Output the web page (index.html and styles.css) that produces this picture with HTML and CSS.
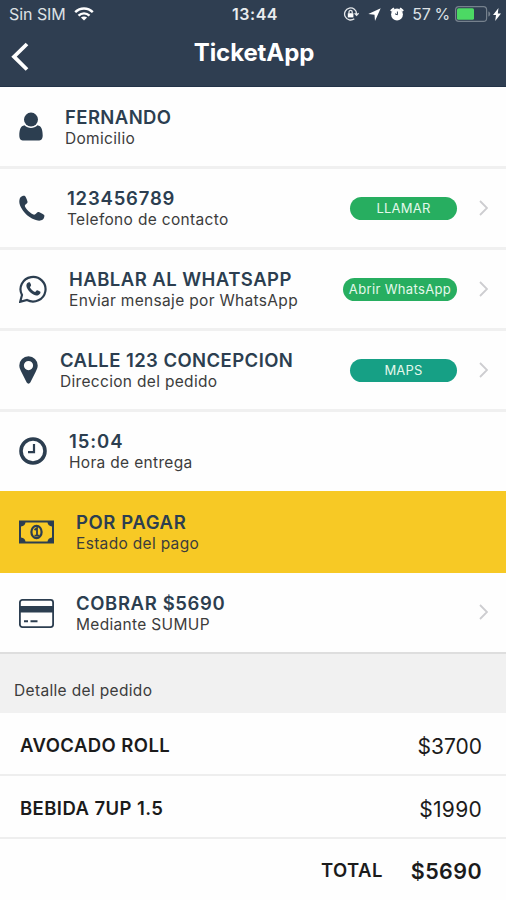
FILE: index.html
```
<!DOCTYPE html>
<html lang="es">
<head>
<meta charset="utf-8">
<title>TicketApp</title>
<link rel="stylesheet" href="styles.css">
</head>
<body>
<header class="header">
  <div class="status">
    <div class="status-left">
      <span class="carrier">Sin SIM</span>
      <svg width="20" height="14" viewBox="0 0 20 14" fill="none" stroke="#fff" stroke-width="2.4"><path d="M1.2 5.2C6.2.2 13.8.2 18.8 5.2M4.5 8.6c3.2-3 7.8-3 11 0"/><path d="M10 13.6 6.9 10.6c1.8-1.5 4.4-1.5 6.2 0z" fill="#fff" stroke="none"/></svg>
    </div>
    <span class="time">13:44</span>
    <div class="status-right">
      <svg class="lock" width="16" height="14" viewBox="0 0 16 14" fill="none" stroke="#e4e7ea" stroke-width="1.3"><path d="M13.600 7A6 6 0 1 0 11.300 11.700M11.600 6.200l2 2.200 2-2.200"/><rect x="4.800" y="6.200" width="5.600" height="4.200" fill="#fff" stroke="none"/><path d="M6 6.500V5a1.600 1.600 0 0 1 3.200 0v1.500"/></svg>
      <svg class="arrow" width="13" height="13" viewBox="0 0 13 13" fill="#fff"><path d="M12.700.3.3 6l6.200.7.5 6.200z"/></svg>
      <svg class="alarm" width="14" height="14" viewBox="0 0 14 14"><circle cx="7" cy="7.500" r="5.900" fill="#fff"/><path d="M.8 4 4 1.200M10 1.200 13.200 4" stroke="#fff" stroke-width="2"/><path d="M7.400 4.500v3.300L5 6.800" fill="none" stroke="#2f3e51" stroke-width="1"/></svg>
      <span class="percent">57 %</span>
      <svg class="battery" width="36" height="16" viewBox="0 0 36 16"><rect x=".6" y=".6" width="31" height="14.8" rx="3.2" fill="none" stroke="#76818d" stroke-width="1.2"/><rect x="2" y="2.2" width="17" height="11.6" rx="1.5" fill="#4cd964"/><path d="M33.3 5.5c2.6.6 2.6 4.4 0 5z" fill="#76818d"/></svg>
      <svg class="bolt" width="8" height="13" viewBox="0 0 8 13" fill="#fff"><path d="M5.5 0 0 7h3L2.2 13 8 5.4H4.8z"/></svg>
    </div>
  </div>
  <div class="nav">
    <svg class="back" width="19" height="30" viewBox="0 0 19 30" fill="none" stroke="#fff" stroke-width="3.8"><path d="M17 2 4 14.7 17 27.5"/></svg>
    <h1 class="title">TicketApp</h1>
  </div>
</header>

<main>
  <section class="row row-first">
    <svg width="24" height="30" viewBox="0 0 24 30" fill="#2c3e50"><circle cx="12" cy="7.600" r="7"/><path d="M5.500 13.300c3.700 3.500 9.300 3.500 13 0C22.500 14 23.700 18 23.700 23.500c0 3.700-1.700 5.100-4.400 5.100H4.700c-2.700 0-4.400-1.400-4.400-5.100 0-5.500 1.200-9.500 5.200-10.200z"/></svg>
    <div class="info"><h2 class="t-name">FERNANDO</h2><p>Domicilio</p></div>
  </section>
  <section class="row">
    <svg width="26" height="27" viewBox="0 0 26 27" fill="#2c3e50"><path d="M1.500 2.300C2.400 1 5 .2 6 .9c.8.600 2.500 5 2.600 6.100.1 1.400-2.800 2.500-2.800 3.700 0 2 6.400 8.700 9.300 9 1.600.1 2.500-2.800 4-2.800 1.200 0 5.500 2.300 6.100 3.100.7 1-.300 3.700-1.400 4.600-3 2.400-8.700.7-13.200-2.500C5.800 18.700 1.400 12.800.5 8.500.1 6.300.3 3.900 1.500 2.300z"/></svg>
    <div class="info"><h2 class="t-phone">123456789</h2><p>Telefono de contacto</p></div>
    <span class="pill pill-call">LLAMAR</span>
    <svg class="chevron" width="9" height="16" viewBox="0 0 9 16"><path d="M1 1l7 7-7 7"/></svg>
  </section>
  <section class="row">
    <svg width="28" height="28" viewBox="0 0 28 28"><path d="M1.200 26.800 3 20A12.500 12.300 0 1 1 8 25z" fill="none" stroke="#2c3e50" stroke-width="2.200"/><path d="M8.200 8.200c.7-1 1.800-1.200 2.500-.9.5.3 1.400 2.500 1.400 3 0 .8-1.300 1.600-1.200 2 .5 1.600 3.300 4.100 5.100 4.600.7.100 1.400-1.800 2.200-1.700.7 0 3 1.200 3.200 1.600.5 2-1.700 3.700-3.700 3.700-4 0-10-5.500-10.300-9.400 0-1 .2-2.200.8-2.900z" fill="#2c3e50"/></svg>
    <div class="info"><h2 class="t-wa">HABLAR AL WHATSAPP</h2><p>Enviar mensaje por WhatsApp</p></div>
    <span class="pill pill-wa">Abrir WhatsApp</span>
    <svg class="chevron" width="9" height="16" viewBox="0 0 9 16"><path d="M1 1l7 7-7 7"/></svg>
  </section>
  <section class="row">
    <svg width="19" height="28" viewBox="0 0 19 28"><path d="M9.500.3a9.200 9.200 0 0 1 9.200 9.200c0 2.500-1 4.200-2.100 6.400l-5.300 10.700c-.8 1.500-2.800 1.500-3.600 0L2.400 15.900C1.300 13.700.3 12 .3 9.500A9.200 9.200 0 0 1 9.500.3zm0 4.700a4.600 4.600 0 1 0 0 9.200 4.600 4.600 0 0 0 0-9.200z" fill="#2c3e50" fill-rule="evenodd"/></svg>
    <div class="info"><h2 class="t-dir">CALLE 123 CONCEPCION</h2><p>Direccion del pedido</p></div>
    <span class="pill pill-maps">MAPS</span>
    <svg class="chevron" width="9" height="16" viewBox="0 0 9 16"><path d="M1 1l7 7-7 7"/></svg>
  </section>
  <section class="row row-hour">
    <svg width="28" height="28" viewBox="0 0 28 28" fill="none" stroke="#2c3e50"><circle cx="14" cy="14" r="12" stroke-width="3.600"/><path d="M15 7v8.200H9" stroke-width="2.200"/></svg>
    <div class="info"><h2 class="t-hour">15:04</h2><p>Hora de entrega</p></div>
  </section>
  <section class="row row-pending">
    <svg width="35" height="24" viewBox="0 0 35 24"><path d="M0 .5h35v23H0zM6.500 2.500Q6 6 2 6.500v11q4 .5 4.500 4h22q.5-3.500 4.500-4v-11q-4-.5-4.500-4z" fill="#2c3e50" fill-rule="evenodd"/><ellipse cx="17.500" cy="12" rx="5.100" ry="6.200" fill="none" stroke="#2c3e50" stroke-width="2.200"/><path d="M15.500 10 18 8v7.200M15.500 15.700h5" fill="none" stroke="#2c3e50" stroke-width="1.800"/></svg>
    <div class="info"><h2 class="t-pay">POR PAGAR</h2><p>Estado del pago</p></div>
  </section>
  <section class="row row-last">
    <svg width="35" height="29" viewBox="0 0 35 29"><rect x=".9" y=".9" width="33.200" height="27.200" rx="2.500" fill="none" stroke="#2c3e50" stroke-width="1.800"/><path d="M1 7h33v6.500H1zM5 21.300h4v2H5zM11.500 21.300h7v2h-7z" fill="#2c3e50"/></svg>
    <div class="info"><h2 class="t-cobrar">COBRAR $5690</h2><p>Mediante SUMUP</p></div>
    <svg class="chevron" width="9" height="16" viewBox="0 0 9 16"><path d="M1 1l7 7-7 7"/></svg>
  </section>

  <div class="section-label">Detalle del pedido</div>
  <div class="item"><span class="product">AVOCADO ROLL</span><span class="price">$3700</span></div>
  <div class="item"><span class="product">BEBIDA 7UP 1.5</span><span class="price price-drink">$1990</span></div>
  <div class="item item-total"><span class="product">TOTAL</span><span class="price total">$5690</span></div>
</main>
</body>
</html>
```
FILE: styles.css
```
* { box-sizing: border-box; }
body { margin: 0; width: 506px; height: 900px; overflow: hidden; background: #fefefe; font-family: Inter, "Liberation Sans", sans-serif; color: #2c3e50; white-space: nowrap; }
h1, h2, p { margin: 0; }
svg { display: block; flex: none; }

.header { height: 87px; background: #2f3e51; border-bottom: 1px solid #233348; color: #fff; }
.status { height: 29px; display: grid; grid-template-columns: 1fr auto 1fr; align-items: center; padding: 0 5px 1px 9px; font-size: 16px; line-height: 20px; }
.status-left, .status-right { display: flex; align-items: center; }
.status-left { gap: 8px; }
.status-right { justify-content: flex-end; }
.carrier, .percent { color: #dde1e5; }
.carrier { letter-spacing: -.05px; }
.time { font-weight: 600; letter-spacing: .55px; color: #e9ecef; }
.arrow { margin-left: 9px; }
.alarm { margin-left: 9px; }
.percent { margin-left: 8px; letter-spacing: -.3px; }
.battery { margin-left: 5px; }
.bolt { margin-left: 2px; }
.nav { height: 57px; display: grid; grid-template-columns: 82px 1fr 80px; align-items: start; }
.back { margin: 13px 0 0 10px; }
.title { font-size: 24px; line-height: 30px; font-weight: 700; letter-spacing: -.1px; text-align: center; padding-top: 9px; }

.row { height: 81px; display: flex; align-items: center; padding: 0 18px 0 19px; border-bottom: 3px solid #f0f0f0; }
.row-first { height: 82px; padding-top: 1px; }
.row-hour { height: 79px; border-bottom: 0; padding-bottom: 1px; }
.row-pending { height: 82px; background: #f7c925; border-bottom-color: #f7c925; padding-top: 3px; }
.row-last { border-bottom: 2px solid #dedede; padding-top: 2px; }
.row-last .chevron { margin-bottom: 3px; }
.info { flex: 1; margin-left: 22px; padding-top: 2px; }
.row-last .info { padding-top: 0; }
.info h2 { margin: -1px 0 1px; font-size: 18.500px; line-height: 22px; font-weight: 600; }
.info p { font-size: 15.500px; line-height: 20px; color: #3c3c3c; letter-spacing: .32px; }
.info .t-name { letter-spacing: .4px; }
.info .t-phone { letter-spacing: .8px; }
.info .t-wa { letter-spacing: .46px; }
.info .t-dir { letter-spacing: .42px; }
.info .t-hour { letter-spacing: .9px; }
.info .t-pay { letter-spacing: .6px; }
.info .t-cobrar { letter-spacing: .62px; }

.pill { width: 107px; height: 23px; border-radius: 12px; background: #27ae60; color: #e4f8eb; font-size: 13px; line-height: 23px; letter-spacing: .2px; text-align: center; }
.pill-wa { width: 114px; letter-spacing: .35px; }
.pill-maps { background: #16a085; }
.chevron { margin-left: 22px; fill: none; stroke: #cdcdd0; stroke-width: 1.800; }

.section-label { height: 59px; padding: 26px 0 0 14px; background: #f1f1f1; color: #3c3c3c; font-size: 15.500px; line-height: 22px; letter-spacing: .34px; }
.item { height: 63px; display: flex; align-items: center; justify-content: space-between; padding: 3px 24px 0 20px; border-bottom: 2px solid #eee; color: #1b1b1b; }
.product { font-size: 18.500px; font-weight: 600; letter-spacing: .42px; }
.price { font-size: 21px; padding-top: 2px; }
.price-drink { letter-spacing: .3px; }
.item-total { justify-content: flex-end; gap: 28px; border: 0; padding: 0 24px 2px 20px; }
.total { font-weight: 600; font-size: 21.500px; letter-spacing: .4px; }
```
